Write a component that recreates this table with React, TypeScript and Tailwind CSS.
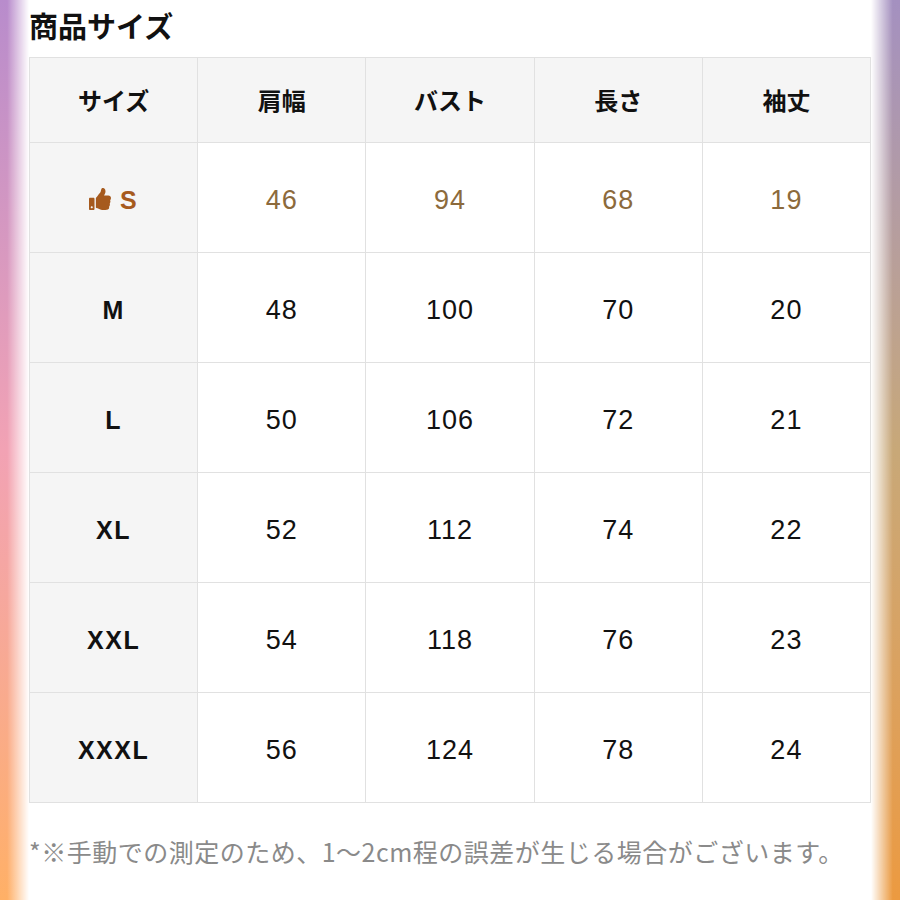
import React from "react";
import { FaThumbsUp } from "react-icons/fa";

const headers = ["サイズ", "肩幅", "バスト", "長さ", "袖丈"];
const rows: [string, string, string, string, string][] = [
  ["S", "46", "94", "68", "19"],
  ["M", "48", "100", "70", "20"],
  ["L", "50", "106", "72", "21"],
  ["XL", "52", "112", "74", "22"],
  ["XXL", "54", "118", "76", "23"],
  ["XXXL", "56", "124", "78", "24"],
];

const jp = "font-['Noto_Sans_CJK_JP','Noto_Sans',sans-serif]";
const num = "font-['Liberation_Sans','Noto_Sans_CJK_JP',sans-serif]";

export default function App() {
  return (
    <div className="flex w-[900px] h-[900px] bg-white overflow-hidden">
      <div className="w-[29px] shrink-0 h-full bg-gradient-to-b from-[#b88ccc] via-[#f2a2b4] to-[#ffb066] [mask-image:linear-gradient(to_right,black_25%,transparent)]" />
      <div className="flex-1 flex flex-col">
        <div className={`h-[50px] flex items-center text-[29px] leading-none font-bold text-[#111] ${jp}`}>
          商品サイズ
        </div>
        <div className="mt-[7px] grid grid-cols-5 grid-rows-[84px_repeat(6,109px)] gap-px bg-[#e1e1e1] border border-[#e1e1e1]">
          {headers.map((h) => (
            <div
              key={h}
              className={`bg-[#f5f5f5] flex items-center justify-center text-[24px] font-bold text-[#111] ${jp}`}
            >
              {h}
            </div>
          ))}
          {rows.map((r, i) =>
            r.map((c, j) => {
              const isS = i === 0;
              if (j === 0) {
                return (
                  <div
                    key={`${i}-${j}`}
                    className={`bg-[#f5f5f5] flex items-center justify-center gap-[9px] pt-[6px] text-[25px] font-bold tracking-[1.5px] ${num} ${
                      isS ? "text-[#a65a1e]" : "text-[#111]"
                    }`}
                  >
                    {isS && <FaThumbsUp className="w-[22px] h-[22px] -mt-[4px] text-[#a65a1e]" />}
                    {c}
                  </div>
                );
              }
              return (
                <div
                  key={`${i}-${j}`}
                  className={`bg-white flex items-center justify-center pt-[6px] text-[27px] tracking-[1px] ${num} ${
                    isS ? "text-[#8c6a3c]" : "text-[#111]"
                  }`}
                >
                  {c}
                </div>
              );
            })
          )}
        </div>
        <div className={`mt-[30px] text-[25px] text-[#8a8a8a] tracking-[0.5px] ${jp}`}>
          *※手動での測定のため、1〜2cm程の誤差が生じる場合がございます。
        </div>
      </div>
      <div className="w-[29px] shrink-0 h-full bg-gradient-to-b from-[#a490c0] via-[#c8a878] to-[#ec9a40] [mask-image:linear-gradient(to_left,black_25%,transparent)]" />
    </div>
  );
}
